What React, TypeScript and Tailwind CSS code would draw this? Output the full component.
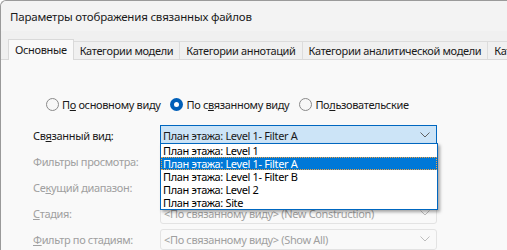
import React from "react";

const FONT = { fontFamily: '"Noto Sans", "Segoe UI", sans-serif' };

const TABS = [
  "Основные",
  "Категории модели",
  "Категории аннотаций",
  "Категории аналитической модели",
  "Категории импортированных",
];

const ITEMS = [
  "План этажа: Level 1",
  "План этажа: Level 1- Filter A",
  "План этажа: Level 1- Filter B",
  "План этажа: Level 2",
  "План этажа: Site",
];

function Chevron({ color = "#606060" }: { color?: string }) {
  return (
    <svg width="10" height="6" viewBox="0 0 10 6" className="shrink-0">
      <path d="M0.5 0.5 L5 5 L9.5 0.5" fill="none" stroke={color} strokeWidth="1" />
    </svg>
  );
}

function Radio({ checked, label }: { checked?: boolean; label: React.ReactNode }) {
  return (
    <div className="flex items-center gap-[3px]">
      {checked ? (
        <span className="w-[13px] h-[13px] rounded-full bg-[#005fb8] flex items-center justify-center">
          <span className="w-[5px] h-[5px] rounded-full bg-white" />
        </span>
      ) : (
        <span className="w-[13px] h-[13px] rounded-full border border-[#8a8a8a] bg-[#f7f7f7]" />
      )}
      <span>{label}</span>
    </div>
  );
}

function Row({ label, children, disabled }: { label: React.ReactNode; children?: React.ReactNode; disabled?: boolean }) {
  return (
    <div className="flex items-center h-[26px]">
      <div className={`w-[127px] ${disabled ? "text-[#a0a0a0]" : "text-[#1a1a1a]"}`}>{label}</div>
      {children}
    </div>
  );
}

function DisabledCombo({ text }: { text: string }) {
  return (
    <div className="w-[277px] h-[21px] rounded-[3px] border border-[#e3e3e3] bg-[#f9f9f9] flex items-center pl-[3px] pr-[6px] text-[#a0a0a0]">
      <span className="flex-1 whitespace-nowrap">{text}</span>
      <Chevron color="#bdbdbd" />
    </div>
  );
}

export default function App() {
  return (
    <div className="w-[507px] h-[250px] overflow-hidden bg-white" style={FONT}>
      <div className="relative w-[520px] h-[260px] border-l border-t border-[#9a9a9a] rounded-tl-[6px] bg-[#f0f0f0] text-[11px] leading-[13px] tracking-[-0.35px]">
        {/* title bar */}
        <div className="h-[30px] bg-[#f3f3f3] rounded-tl-[6px] flex items-center pl-[9px] text-[#1a1a1a] text-[11.5px] tracking-[-0.2px]">
          Параметры отображения связанных файлов
        </div>

        {/* tabs */}
        <div className="flex items-end h-[28px] pl-[7px]">
          {TABS.map((t, i) =>
            i === 0 ? (
              <div key={t} className="h-[21px] px-[6px] flex items-center bg-[#f9f9f9] border border-b-0 border-[#d9d9d9] text-[#1a1a1a] relative z-10 -mb-px pb-[2px]">
                {t}
              </div>
            ) : (
              <div key={t} className="h-[18px] px-[6px] flex items-center bg-[#f0f0f0] border border-l-0 border-b-0 border-[#dcdcdc] text-[#1a1a1a] whitespace-nowrap">
                {t}
              </div>
            )
          )}
        </div>

        {/* tab page */}
        <div className="bg-[#f9f9f9] border-t border-[#d9d9d9] h-[200px] pl-[32px] text-[#1a1a1a]">
          <div className="flex items-center gap-[10px] pl-[13px] pt-[37px] h-[51px]">
            <Radio label={<>П<u>о</u> основному виду</>} />
            <Radio checked label={<>По с<u>в</u>язанному виду</>} />
            <Radio label={<>По<u>л</u>ьзовательские</>} />
          </div>

          <div className="flex flex-col pt-[11px]">
            <Row label={<>Св<u>я</u>занный вид:</>}>
              <div className="w-[277px] h-[21px] border border-[#0067c0] bg-[#cce4f7] flex items-center pl-[2px] pr-[6px]">
                <span className="flex-1 whitespace-nowrap">План этажа: Level 1- Filter A</span>
                <Chevron />
              </div>
            </Row>
            <Row disabled label="Фильтры просмотра:" />
            <Row disabled label={<>Се<u>к</u>ущий диапазон:</>} />
            <Row disabled label={<><u>С</u>тадия:</>}>
              <DisabledCombo text="<По связанному виду> (New Construction)" />
            </Row>
            <Row disabled label={<><u>Ф</u>ильтр по стадиям:</>}>
              <DisabledCombo text="<По связанному виду> (Show All)" />
            </Row>
          </div>
        </div>

        {/* open dropdown list */}
        <div className="absolute left-[159px] top-[142px] w-[278px] bg-white border border-[#0067c0] shadow-[2px_2px_3px_rgba(0,0,0,0.35)] text-black">
          {ITEMS.map((it, i) =>
            i === 1 ? (
              <div key={it} className="h-[13px] pl-[2px] bg-[#0078d7] text-white outline-1 outline-dotted outline-[#f0a040] -outline-offset-1 whitespace-nowrap">
                {it}
              </div>
            ) : (
              <div key={it} className="h-[13px] pl-[2px] whitespace-nowrap">
                {it}
              </div>
            )
          )}
        </div>
      </div>
    </div>
  );
}
